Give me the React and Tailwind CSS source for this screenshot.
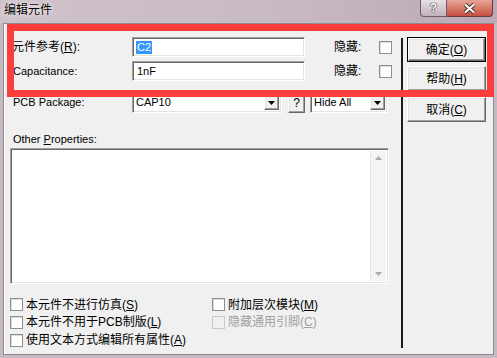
import React from 'react';

const font = "font-['Liberation_Sans','Noto_Sans_CJK_SC',sans-serif]";
const sunken =
  'bg-white border border-t-[#a0a0a0] border-l-[#a0a0a0] border-r-white border-b-white shadow-[inset_1px_1px_0_#696969,inset_-1px_-1px_0_#e3e3e3]';
const raised =
  'bg-[#f0f0f0] border border-t-white border-l-white border-r-[#696969] border-b-[#696969] shadow-[inset_-1px_-1px_0_#a0a0a0,inset_1px_1px_0_#e3e3e3]';

const Arrow = ({ up, color = '#000' }) => (
  <svg width="7" height="4" viewBox="0 0 7 4">
    <polygon points={up ? '0,4 7,4 3.5,0' : '0,0 7,0 3.5,4'} fill={color} />
  </svg>
);

const Combo = ({ text, className }) => (
  <div className={`${sunken} ${className} h-[21px] flex items-stretch p-[2px]`}>
    <span className="flex-1 pl-[1px] text-[11px] leading-[15px]">{text}</span>
    <div className={`${raised} w-[15px] flex items-center justify-center`}>
      <Arrow />
    </div>
  </div>
);

const Check = ({ disabled }) => (
  <span
    className={`w-[13px] h-[13px] shrink-0 border ${
      disabled ? 'border-[#c8c8c8] bg-[#f0f0f0]' : 'border-[#8e8f8f] bg-white shadow-[inset_1px_1px_0_#dcdcdc]'
    }`}
  />
);

const Btn = ({ children, def, className = '' }) => (
  <div className={`${def ? 'border border-black' : ''} w-[79px] h-[25px] ${className}`}>
    <div className={`${raised} w-full h-full flex items-center justify-center text-[12px]`}>{children}</div>
  </div>
);

const U = ({ children }) => <span className="underline underline-offset-[1px]">{children}</span>;

export default function App() {
  return (
    <div className={`relative w-[497px] h-[358px] overflow-hidden bg-[#c7b9c3] text-black ${font}`}>
      {/* title bar */}
      <div className="h-[23px] flex items-start bg-gradient-to-r from-[#cfc2ca] via-[#c9bbc5] to-[#bcaab6]">
        <span className="ml-[4px] mt-[2px] text-[12px] leading-[16px] [text-shadow:0_0_6px_#f4eef2,0_0_3px_#f4eef2]">
          编辑元件
        </span>
        <div className="ml-auto mr-[4px] flex">
          <div className="w-[27px] h-[17px] rounded-bl-[4px] border border-t-0 border-[#6b5d66] bg-gradient-to-b from-[#e8e0e5] to-[#c1b2bc] flex items-center justify-center text-[12px] font-bold leading-none text-white [text-shadow:0_0_1px_#333,0_0_1px_#333,0_0_1px_#333]">
            ?
          </div>
          <div className="w-[46px] h-[17px] rounded-br-[4px] border border-t-0 border-l-0 border-[#6b3a3a] bg-gradient-to-b from-[#e6a497] to-[#c44f41] flex items-center justify-center">
            <svg width="13" height="11" viewBox="0 0 13 11">
              <path d="M2 1.5 L11 9.5 M11 1.5 L2 9.5" stroke="#4a2a2a" strokeWidth="3.8" />
              <path d="M2 1.5 L11 9.5 M11 1.5 L2 9.5" stroke="#fff" strokeWidth="2.2" />
            </svg>
          </div>
        </div>
      </div>

      {/* frame + client */}
      <div className="flex h-[332px]">
        <div className="w-[3px]" />
        <div className="w-[491px] h-full border border-[#8d8d8d] bg-[#f0f0f0] shadow-[inset_1px_1px_0_#fff] flex text-[11px]">
          {/* left column */}
          <div className="w-[397px] flex flex-col">
            <div className="mt-[13px] h-[20px] flex items-center">
              <span className="ml-[8px] w-[120px] text-[12px]">
                元件参考(<U>R</U>):
              </span>
              <div className={`${sunken} w-[173px] h-[20px] flex items-center pl-[3px]`}>
                <span className="bg-[#3399ff] text-white leading-[13px] px-[1px]">C2</span>
              </div>
              <span className="ml-[29px] w-[45px] text-[12px]">隐藏:</span>
              <Check />
            </div>
            <div className="mt-[4px] h-[20px] flex items-center">
              <span className="ml-[9px] w-[119px]">Capacitance:</span>
              <div className={`${sunken} w-[173px] h-[20px] flex items-center pl-[4px]`}>1nF</div>
              <span className="ml-[29px] w-[45px] text-[12px]">隐藏:</span>
              <Check />
            </div>
            <div className="mt-[11px] h-[21px] flex items-center">
              <span className="ml-[9px] w-[119px]">PCB Package:</span>
              <Combo text="CAP10" className="w-[150px]" />
              <div className={`${raised} ml-[6px] w-[17px] h-[20px] flex items-center justify-center text-[12px]`}>?</div>
              <Combo text="Hide All" className="ml-[5px] w-[78px]" />
            </div>
            <div className="mt-[19px] ml-[9px] h-[14px] leading-[14px]">
              Other <U>P</U>roperties:
            </div>
            <div className={`${sunken} mt-[2px] ml-[6px] w-[379px] h-[136px] flex justify-end p-[2px]`}>
              <div className="w-[16px] bg-[#f4f4f4] border-l border-[#e6e6e6] flex flex-col items-center justify-between py-[5px]">
                <Arrow up color="#a8a8a8" />
                <Arrow color="#a8a8a8" />
              </div>
            </div>
            <div className="mt-[12px] ml-[6px] grid grid-cols-[202px_1fr] text-[12px]">
              <div className="h-[17px] flex items-center gap-[3px]">
                <Check />
                <span>本元件不进行仿真(<U>S</U>)</span>
              </div>
              <div className="h-[17px] flex items-center gap-[3px]">
                <Check />
                <span>附加层次模块(<U>M</U>)</span>
              </div>
              <div className="h-[18px] flex items-center gap-[3px]">
                <Check />
                <span>本元件不用于PCB制版(<U>L</U>)</span>
              </div>
              <div className="h-[18px] flex items-center gap-[3px] text-[#a0a0a0]">
                <Check disabled />
                <span>隐藏通用引脚(<U>C</U>)</span>
              </div>
              <div className="h-[18px] flex items-center gap-[3px] col-span-2">
                <Check />
                <span>使用文本方式编辑所有属性(<U>A</U>)</span>
              </div>
            </div>
          </div>

          {/* right column */}
          <div className="flex">
            <div className="mt-[14px] w-[2px] h-[310px] bg-[#1c1c1c]" />
            <div className="ml-[4px] flex flex-col">
              <Btn def className="mt-[13px]">
                确定(<U>O</U>)
              </Btn>
              <Btn className="mt-[4px]">
                帮助(<U>H</U>)
              </Btn>
              <Btn className="mt-[6px]">
                取消(<U>C</U>)
              </Btn>
            </div>
          </div>
        </div>
        <div className="w-[3px]" />
      </div>

      {/* annotation box */}
      <div className="absolute left-[7px] top-[24px] w-[487px] h-[73px] border-[7px] border-[#fd3c3c]" />
    </div>
  );
}
